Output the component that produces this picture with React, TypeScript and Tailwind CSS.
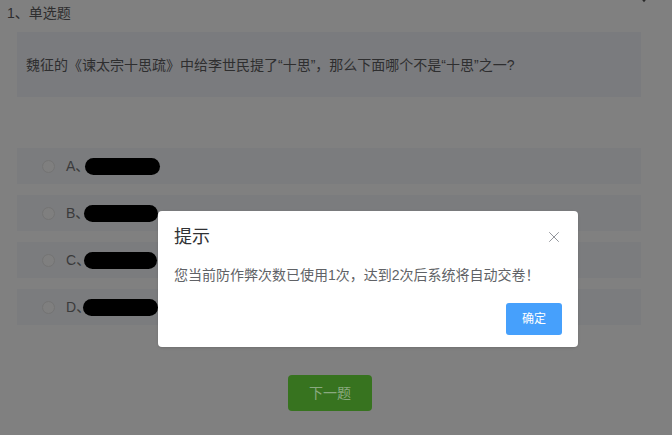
import { X } from 'lucide-react'

const OPTIONS = [
  { key: 'A', blob: 'w-[75px] ml-[-4px]' },
  { key: 'B', blob: 'w-[74px] ml-[-5px]' },
  { key: 'C', blob: 'w-[73px] ml-[-6px]' },
  { key: 'D', blob: 'w-[75px] ml-[-7px]' },
]

export default function App() {
  return (
    <div
      className="relative h-[435px] w-full overflow-hidden bg-[#808080] text-[#2e2e2f]"
      style={{ fontFamily: '"Liberation Sans", "Noto Sans CJK SC", sans-serif' }}
    >
      {/* cut-off icon at the top right */}
      <svg className="absolute left-[638px] top-[-8px]" width="12" height="12" viewBox="0 0 12 12">
        <path d="M2 4 L6 9 L10 4" fill="none" stroke="#2a2a2a" strokeWidth="1.6" />
      </svg>

      <div className="pl-[7px] pt-[4px] text-sm leading-[18px]">1、单选题</div>

      {/* question */}
      <div className="ml-[17px] mt-[10px] flex h-[65px] w-[624px] items-center bg-[#7a7b7e] pl-[9px] text-sm">
        魏征的《谏太宗十思疏》中给李世民提了“十思”，那么下面哪个不是“十思”之一?
      </div>

      {/* options */}
      <div className="ml-[17px] mt-[51px] flex w-[624px] flex-col gap-[11px]">
        {OPTIONS.map((o) => (
          <div key={o.key} className="flex h-[36px] items-center bg-[#7b7c7e] pl-[25px] text-sm text-[#3a3a3b]">
            <span className="h-[13px] w-[13px] rounded-full border border-[#747474] bg-[#7f7f7f]" />
            <span className="ml-[11px]">{o.key}、</span>
            <span className={`inline-block h-[17px] rounded-full bg-black ${o.blob}`} />
          </div>
        ))}
      </div>

      {/* next */}
      <button className="ml-[288px] mt-[50px] flex h-[36px] w-[84px] items-center justify-center rounded-[4px] bg-[#37731f] text-sm text-[#8aa97f]">
        下一题
      </button>

      {/* dialog */}
      <div className="absolute left-[158px] top-[211px] h-[136px] w-[420px] rounded-[4px] bg-white shadow-sm">
        <div className="flex items-center justify-between pl-[16px] pr-[15px] pt-[14px]">
          <span className="text-lg leading-[24px] text-[#303133]">提示</span>
          <X className="h-[18px] w-[18px] text-[#909399]" strokeWidth={1.3} />
        </div>
        <div className="mt-[16px] pl-[16px] text-sm leading-[20px] text-[#606266]">
          您当前防作弊次数已使用1次，达到2次后系统将自动交卷！
        </div>
        <div className="mt-[18px] flex justify-end pr-[16px]">
          <button className="h-[32px] w-[56px] rounded-[3px] bg-[#46a0fc] text-xs text-white">确定</button>
        </div>
      </div>
    </div>
  )
}
